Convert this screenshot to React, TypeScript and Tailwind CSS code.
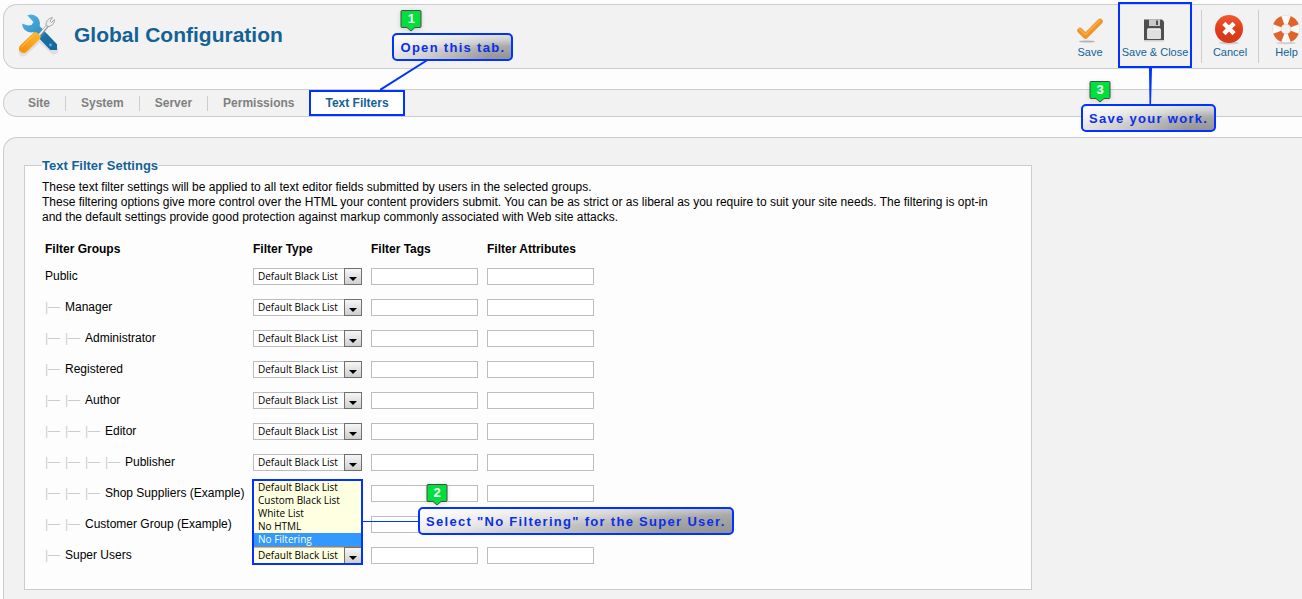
import type { ReactNode } from "react";
import clsx from "clsx";

const tabs = ["Site", "System", "Server", "Permissions", "Text Filters"];

const filterTypes = [
  "Default Black List",
  "Custom Black List",
  "White List",
  "No HTML",
  "No Filtering",
];

const groups = [
  { name: "Public", depth: 0 },
  { name: "Manager", depth: 1 },
  { name: "Administrator", depth: 2 },
  { name: "Registered", depth: 1 },
  { name: "Author", depth: 2 },
  { name: "Editor", depth: 3 },
  { name: "Publisher", depth: 4 },
  { name: "Shop Suppliers (Example)", depth: 3 },
  { name: "Customer Group (Example)", depth: 2 },
  { name: "Super Users", depth: 1, open: true },
];

function ToolsIcon() {
  return (
    <svg viewBox="0 0 48 48" className="h-12 w-12 shrink-0" aria-hidden="true">
      <defs>
        <linearGradient id="wrench" gradientUnits="userSpaceOnUse" x1="10" y1="6" x2="40" y2="40">
          <stop offset="0" stopColor="#4fb0e2" />
          <stop offset="0.45" stopColor="#3394cb" />
          <stop offset="0.6" stopColor="#1a6fa5" />
          <stop offset="1" stopColor="#14669a" />
        </linearGradient>
        <linearGradient id="handle" gradientUnits="userSpaceOnUse" x1="24" y1="22" x2="8" y2="40">
          <stop offset="0" stopColor="#ffb938" />
          <stop offset="1" stopColor="#f9930c" />
        </linearGradient>
        <mask id="jaw">
          <rect width="48" height="48" fill="#fff" />
          <path d="M4 10 L8 4 L11 4 L17.500 11 L15.500 14 L12 14.500 L4 12 Z" fill="#000" />
        </mask>
      </defs>
      <path d="M7 41 L22 27 M25 27 L38 39" stroke="#000" strokeWidth="9" strokeLinecap="round" opacity="0.08" />
      <g mask="url(#jaw)">
        <circle cx="15" cy="12.500" r="9" fill="url(#wrench)" />
        <path d="M16 13.500 L37.500 36" stroke="url(#wrench)" strokeWidth="9" strokeLinecap="round" />
      </g>
      <circle cx="34.500" cy="34" r="1.400" fill="#5fb4dd" />
      <path d="M21 27 L33 13" stroke="#8f8f8f" strokeWidth="3.200" />
      <path d="M21 26.500 L33 12.500" stroke="#f0f0f0" strokeWidth="1.600" />
      <path d="M30 14.500 Q29.500 8 36.500 6.500 L34 10 L35.500 11.500 L38.500 8.500 Q38.500 14.500 32.500 15.500 Z" fill="#ededed" stroke="#8c8c8c" strokeWidth="0.7" />
      <path d="M7.500 37.500 L19.500 26" stroke="url(#handle)" strokeWidth="9" strokeLinecap="round" />
      <path d="M16.500 23 L20 21.500 L24.500 25.500 L22.500 29 Z" fill="#ffb02e" stroke="#ffb02e" strokeLinejoin="round" />
      <path d="M5.500 36 L17.500 24.500" stroke="#ffca6b" strokeWidth="1" />
    </svg>
  );
}

function CheckIcon() {
  return (
    <svg viewBox="0 0 32 32" className="h-8 w-8" aria-hidden="true">
      <ellipse cx="13" cy="28.500" rx="8" ry="1" fill="#000" opacity="0.25" />
      <path d="M6 17.500 L11.500 23 L26 8.500" stroke="#f0952b" strokeWidth="5.500" strokeLinecap="round" strokeLinejoin="round" fill="none" />
      <path d="M5.500 16 L11.500 21.500 L25.500 7.500" stroke="#f7ad4f" strokeWidth="1.500" strokeLinecap="round" fill="none" />
    </svg>
  );
}

function DiskIcon() {
  return (
    <svg viewBox="0 0 32 32" className="h-8 w-8" aria-hidden="true">
      <path d="M5 6.500 H23 L25 8.500 V27 H5 Z" fill="#4f4f52" />
      <rect x="10" y="6.500" width="11" height="6.500" fill="#c9c9c9" />
      <rect x="17" y="7.500" width="2" height="4.500" fill="#4f4f52" />
      <rect x="8" y="15.500" width="14" height="10.500" rx="1" fill="#e0e0e0" />
      <path d="M9 16 H21" stroke="#fff" />
      <rect x="5" y="27" width="20" height="1.500" fill="#000" opacity="0.15" />
    </svg>
  );
}

function CancelIcon() {
  return (
    <svg viewBox="0 0 32 32" className="h-8 w-8" aria-hidden="true">
      <defs>
        <linearGradient id="cancel" x1="0" y1="0" x2="0" y2="1">
          <stop offset="0" stopColor="#f05a30" />
          <stop offset="0.5" stopColor="#e23c1c" />
          <stop offset="1" stopColor="#d23a1c" />
        </linearGradient>
      </defs>
      <ellipse cx="15" cy="30" rx="10" ry="1.500" fill="#000" opacity="0.15" />
      <circle cx="15" cy="16" r="14" fill="url(#cancel)" />
      <path d="M11.500 12 L18.500 19 M18.500 12 L11.500 19" stroke="#fff" strokeWidth="4.500" strokeLinecap="square" />
    </svg>
  );
}

function HelpIcon() {
  return (
    <svg viewBox="0 0 32 32" className="h-8 w-8" aria-hidden="true">
      <ellipse cx="15" cy="30" rx="10" ry="1.200" fill="#000" opacity="0.15" />
      <circle cx="15" cy="16" r="9" fill="none" stroke="#dcdcdc" strokeWidth="9.500" />
      <circle cx="15" cy="16" r="9" fill="none" stroke="#fafafa" strokeWidth="8.500" />
      <circle
        cx="15"
        cy="16"
        r="9"
        fill="none"
        stroke="#e2622b"
        strokeWidth="9"
        pathLength="80"
        strokeDasharray="11 9"
        strokeDashoffset="-4.500"
      />
      <circle cx="15" cy="16" r="5" fill="#f2f2f2" stroke="#d5c0b4" strokeWidth="0.5" />
    </svg>
  );
}

function ToolbarButton({ label, className, children }: { label: string; className?: string; children: ReactNode }) {
  return (
    <button type="button" className={clsx("flex flex-col items-center pt-2 text-[11px] leading-[14px] whitespace-nowrap text-[#146295]", className)}>
      {children}
      <span>{label}</span>
    </button>
  );
}

function Callout({ step, text, className }: { step: number; text: string; className: string }) {
  return (
    <div
      className={clsx(
        "absolute z-20 flex h-7 items-center rounded-[5px] border-2 border-[#0033ff] px-1.5 text-[13px] font-bold tracking-widest whitespace-nowrap text-[#0a2fe8]",
        "bg-[linear-gradient(to_right,rgba(255,255,255,0.75),rgba(255,255,255,0.1)_80%),linear-gradient(176deg,#f4f4f4_5%,#c8c8c8_40%,#a0a0a0_60%,#868686)]",
        className
      )}
    >
      <div className="absolute -top-[26px] left-1.5 h-[23px] w-[22px]">
        <svg viewBox="0 0 22 23" className="absolute inset-0 drop-shadow-sm" aria-hidden="true">
          <path d="M2 1.500 H20 Q21 1.500 21 2.500 V17.500 Q21 18.500 20 18.500 H15 L11 22 L7 18.500 H2 Q1 18.500 1 17.500 V2.500 Q1 1.500 2 1.500 Z" fill="#00e03c" stroke="#4a4a4a" />
        </svg>
        <span className="relative block text-center leading-5 tracking-normal text-white">{step}</span>
      </div>
      {text}
    </div>
  );
}

function FilterSelect({ id, open }: { id: string; open?: boolean }) {
  return (
    <div className="relative w-[109px] font-['Open_Sans','Liberation_Sans',sans-serif] text-[10px]">
      <select
        id={id}
        defaultValue={filterTypes[0]}
        className={clsx(
          "block h-[17px] w-full appearance-none rounded-none border border-[#bdbdbd] pl-1 leading-[15px] text-black",
          open ? "bg-[#ffffe1]" : "bg-white"
        )}
      >
        {filterTypes.map((type) => (
          <option key={type}>{type}</option>
        ))}
      </select>
      <span className="pointer-events-none absolute inset-y-0 right-0 flex w-[18px] items-end justify-center border border-[#707070] bg-linear-to-b from-[#f6f6f6] to-[#cfcfcf] pb-[3px]">
        <svg viewBox="0 0 8 4" className="h-1 w-2" aria-hidden="true">
          <path d="M0 0 H8 L4 4 Z" fill="#000" />
        </svg>
      </span>
      {open && (
        <>
          <ul role="listbox" aria-label="Filter Type" className="absolute inset-x-0 bottom-full z-10 border-b border-[#888] bg-[#ffffe1] pt-px leading-[13px]">
            {filterTypes.map((type) => (
              <li
                key={type}
                role="option"
                aria-selected={type === "No Filtering"}
                className={clsx("pl-[5px]", type === "No Filtering" && "bg-[#3399ff] text-[#ffffe1]")}
              >
                {type}
              </li>
            ))}
          </ul>
          <div className="pointer-events-none absolute -inset-x-px -top-[68px] -bottom-px z-10 border-2 border-[#0033ff]" />
          <div className="absolute -top-[26px] left-full z-10 h-px w-14 bg-[#0033ff]" />
          <div className="font-['Liberation_Sans',Arial,sans-serif]">
            <Callout step={2} text={'Select "No Filtering" for the Super User.'} className="-top-10 left-[165px]" />
          </div>
        </>
      )}
    </div>
  );
}

export default function App() {
  return (
    <div className="flex min-h-screen flex-col gap-5 overflow-x-hidden bg-[#fdfdfd] pt-1 pl-[3px] font-['Liberation_Sans',Arial,sans-serif] text-xs leading-[15px] text-black">
      <header className="flex h-[65px] shrink-0 justify-between rounded-l-[14px] border border-r-0 border-[#ccc] bg-[#f2f2f2]">
        <div className="flex items-center gap-2.5 pb-1 pl-3">
          <ToolsIcon />
          <h1 className="text-[21px] leading-7 font-bold text-[#146295]">Global Configuration</h1>
        </div>

        {/* Toolbar */}
        <div className="flex items-stretch">
          <ToolbarButton label="Save" className="w-14">
            <CheckIcon />
          </ToolbarButton>
          <div className="relative mr-[9px] flex">
            <ToolbarButton label="Save & Close" className="w-[74px]">
              <DiskIcon />
            </ToolbarButton>
            <div className="pointer-events-none absolute inset-x-0 -top-[3px] bottom-0 border-2 border-[#0033ff]" />
            <svg viewBox="0 0 6 38" className="absolute top-full left-[30px] z-10 h-[38px] w-1.5" aria-hidden="true">
              <path d="M1 0 H4 L3 38 H1.500 Z" fill="#0033ff" />
            </svg>
            <Callout step={3} text="Save your work." className="top-[99px] -left-[37px]" />
          </div>
          <div className="my-[5px] w-px bg-[#ccc]" />
          <ToolbarButton label="Cancel" className="w-14">
            <CancelIcon />
          </ToolbarButton>
          <div className="my-[5px] w-px bg-[#ccc]" />
          <ToolbarButton label="Help" className="w-[43px] pl-3">
            <HelpIcon />
          </ToolbarButton>
        </div>
      </header>

      <nav className="flex h-7 shrink-0 items-center rounded-l-[14px] border border-r-0 border-[#ccc] bg-[#f2f2f2] pl-[9px] font-bold">
        {tabs.map((tab) =>
          tab === "Text Filters" ? (
            <div key={tab} className="relative h-full">
              <a href="#filters" aria-current="page" className="flex h-full items-center border-2 border-[#0033ff] bg-white px-3.5 text-[#146295]">
                {tab}
              </a>
              <svg viewBox="0 0 50 32" className="absolute bottom-full left-[71px] h-8 w-[50px]" aria-hidden="true">
                <path d="M0 32 L49 1" stroke="#0033ff" strokeWidth="2" />
              </svg>
              <Callout step={1} text="Open this tab." className="-top-[57px] left-[83px]" />
            </div>
          ) : (
            <a
              key={tab}
              href={`#${tab.toLowerCase()}`}
              className={clsx("px-[15px] text-[#808080]", tab !== "Permissions" && "border-r border-[#ccc]")}
            >
              {tab}
            </a>
          )
        )}
      </nav>

      <main className="grow rounded-tl-[14px] border-t border-l border-[#ccc] bg-[#f2f2f2] px-5 pt-5 pb-2">
        <fieldset className="w-full max-w-[1008px] border border-[#ccc] bg-[#fdfdfd] px-[17px] pt-[7px] pb-[18px]">
          <legend className="text-[13px] leading-[15px] font-bold text-[#146295]">Text Filter Settings</legend>
          <p>
            These text filter settings will be applied to all text editor fields submitted by users in the selected groups.
            <br />
            These filtering options give more control over the HTML your content providers submit. You can be as strict or as liberal as you require to suit your site needs. The filtering is opt-in
            <br />
            and the default settings provide good protection against markup commonly associated with Web site attacks.
          </p>

          <table className="mt-3 table-fixed text-left">
            <thead>
              <tr className="h-6">
                <th scope="col" className="w-[208px] px-[3px]">Filter Groups</th>
                <th scope="col" className="w-[118px] px-[3px]">Filter Type</th>
                <th scope="col" className="w-[116px] px-[3px]">Filter Tags</th>
                <th scope="col" className="w-[116px] px-[3px]">Filter Attributes</th>
              </tr>
            </thead>
            <tbody>
              {groups.map((group, idx) => (
                <tr key={group.name} className="h-[31px]">
                  <th scope="row" className="px-[3px] font-normal whitespace-nowrap">
                    {Array.from({ length: group.depth }, (_, i) => (
                      <span key={i} className="inline-block w-5 text-[#ccc]">|—</span>
                    ))}
                    <label htmlFor={`type-${idx}`}>{group.name}</label>
                  </th>
                  <td className="px-[3px]">
                    <FilterSelect id={`type-${idx}`} open={group.open} />
                  </td>
                  <td className="px-[3px]">
                    <input type="text" aria-label={`${group.name} filter tags`} className="block h-[17px] w-[107px] border border-[#bdbdbd] bg-white px-1" />
                  </td>
                  <td className="px-[3px]">
                    <input type="text" aria-label={`${group.name} filter attributes`} className="block h-[17px] w-[107px] border border-[#bdbdbd] bg-white px-1" />
                  </td>
                </tr>
              ))}
            </tbody>
          </table>
        </fieldset>
      </main>
    </div>
  );
}
